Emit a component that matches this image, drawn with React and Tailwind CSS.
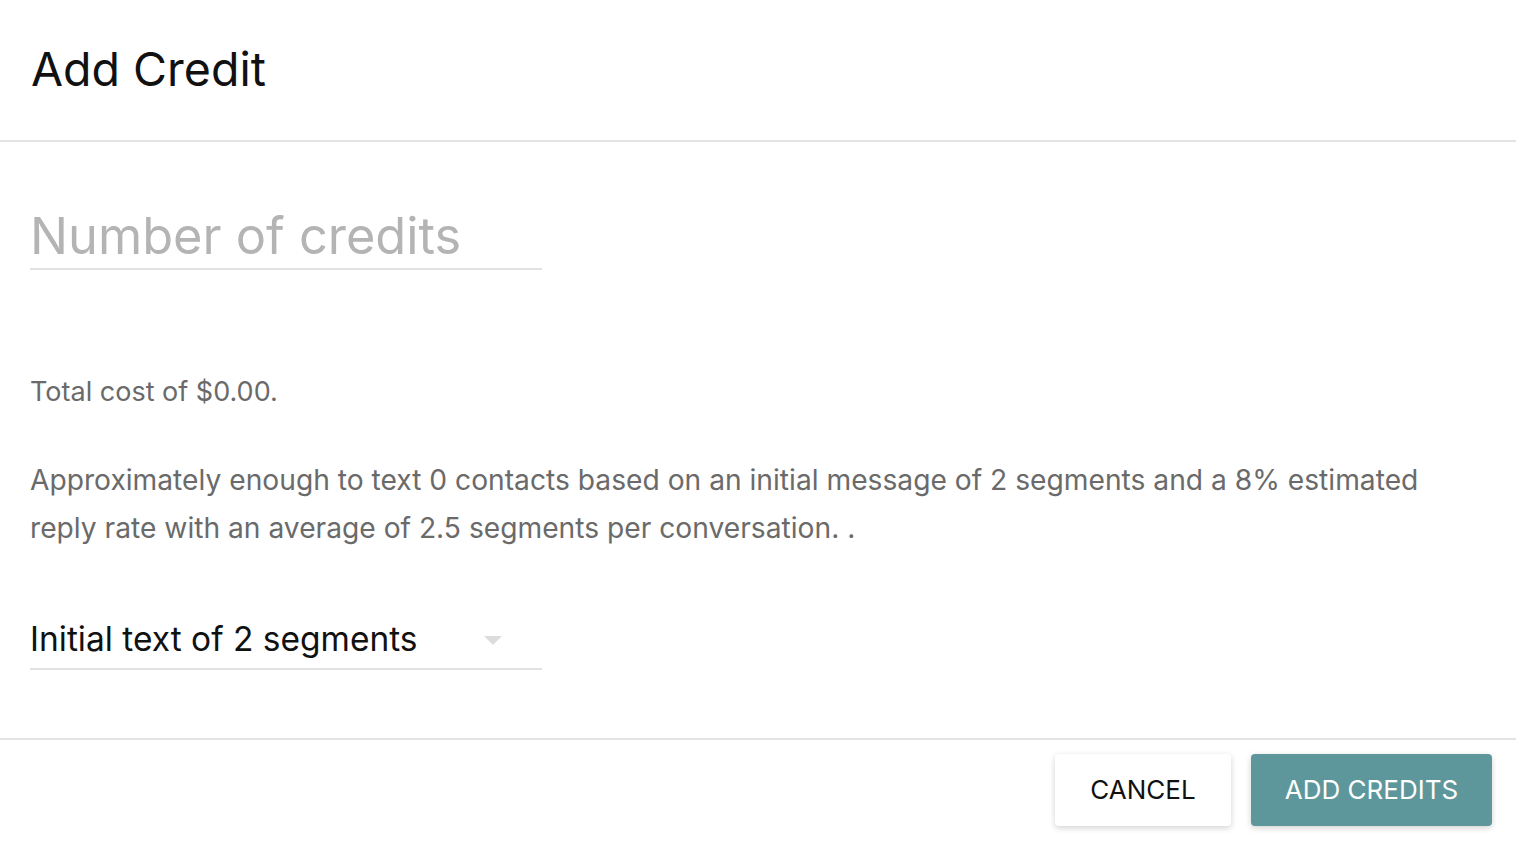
export default function App() {
  return (
    <div className="w-[1516px] h-[858px] bg-white text-black overflow-hidden" style={{ fontFamily: "Inter, 'Noto Sans', sans-serif" }}>
      {/* Header */}
      <div className="h-[142px] border-b-2 border-[#e4e4e4] px-[31px] flex items-center">
        <h1 className="text-[46.5px] font-normal text-[#111]">Add Credit</h1>
      </div>

      {/* Body */}
      <div className="h-[596px] px-[30px] pt-[64px]">
        <div className="w-[512px] border-b-2 border-[#e2e2e2] h-[64px] flex items-end">
          <input
            className="w-full outline-none text-[50.5px] leading-none pb-[2px] placeholder:text-[#b4b4b4] bg-transparent"
            placeholder="Number of credits"
          />
        </div>

        <p className="mt-[98px] text-[27px] text-[#6a6a6a] leading-[48px]">Total cost of $0.00.</p>
        <p className="mt-[40px] max-w-[1440px] text-[28.2px] text-[#6a6a6a] leading-[48px]">
          Approximately enough to text 0 contacts based on an initial message of 2 segments and a 8% estimated reply rate with an average of 2.5 segments per conversation. .
        </p>

        <div className="mt-[58px] w-[512px] border-b-2 border-[#e2e2e2] h-[60px] flex items-center justify-between pr-[40px]">
          <span className="text-[33.5px] text-[#111]">Initial text of 2 segments</span>
          <svg width="18" height="9" viewBox="0 0 18 9" className="mt-[2px]">
            <path d="M0 0 L18 0 L9 9 Z" fill="#dcdcdc" />
          </svg>
        </div>
      </div>

      {/* Footer */}
      <div className="border-t-2 border-[#e4e4e4] flex justify-end gap-[20px] pr-[24px] pt-[14px]">
        <button className="w-[176px] h-[72px] pb-[2px] rounded-[4px] bg-white text-[26px] text-[#111] shadow-[0_2px_6px_rgba(0,0,0,0.18)]">
          CANCEL
        </button>
        <button className="w-[241px] h-[72px] pb-[2px] rounded-[4px] bg-[#5e979b] text-[26px] text-white shadow-[0_2px_6px_rgba(0,0,0,0.18)]">
          ADD CREDITS
        </button>
      </div>
    </div>
  );
}
